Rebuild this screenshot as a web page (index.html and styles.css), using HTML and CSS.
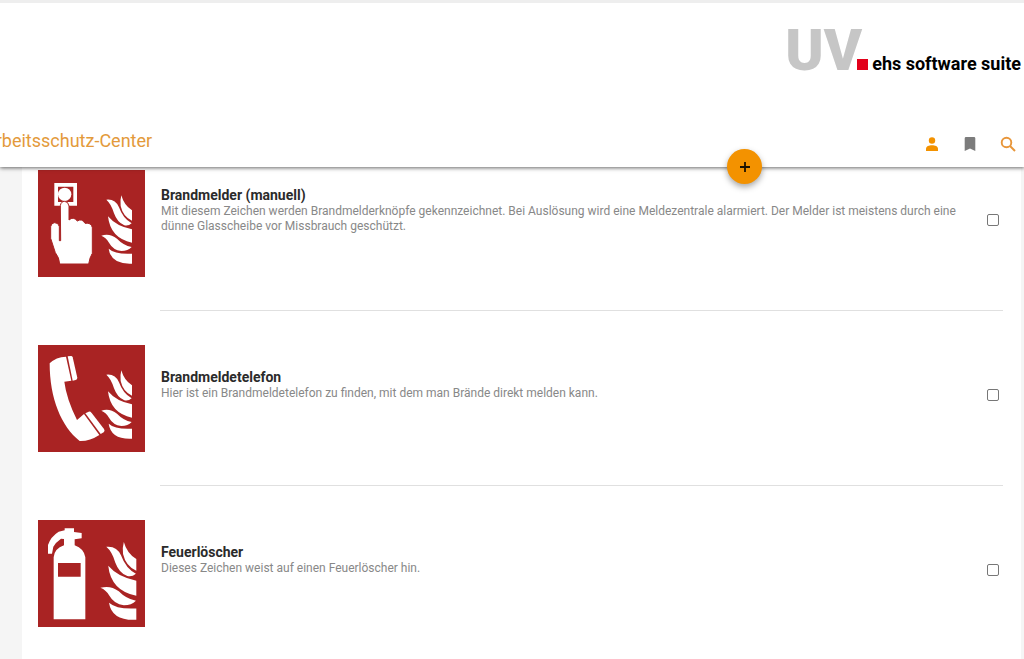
FILE: index.html
```html
<!DOCTYPE html>
<html lang="de">
<head>
  <meta charset="UTF-8">
  <title>Arbeitsschutz-Center</title>
  <meta name="viewport" content="width=device-width, initial-scale=1">
  <link rel="stylesheet" href="styles.css">
</head>
<body>
  <header class="header">
    <div class="brand">
      <span class="brand-uv">UV</span>
      <span class="brand-dot"></span>
      <span class="brand-name">ehs software suite</span>
    </div>
    <div class="toolbar">
      <h1>Arbeitsschutz-Center</h1>
      <nav class="actions">
        <button type="button" aria-label="Profil">
          <svg viewBox="0 0 16 16" fill="#f39200"><circle cx="8" cy="4.5" r="3.2"/><path d="M2 15v-2.200C2 10.300 5 9.300 8 9.300s6 1 6 3.500V15z"/></svg>
        </button>
        <button type="button" aria-label="Lesezeichen">
          <svg viewBox="0 0 16 16" fill="#7c7c7c"><path d="M4 1h8q1.300 0 1.300 1.300V15L8 12.500 2.700 15V2.300Q2.700 1 4 1z"/></svg>
        </button>
        <button type="button" aria-label="Suche">
          <svg viewBox="0 0 16 16" fill="none" stroke="#e8963a" stroke-width="1.900"><circle cx="6.500" cy="6.500" r="4.800"/><path d="M10 10l5 5"/></svg>
        </button>
      </nav>
    </div>
    <button type="button" class="fab" aria-label="Hinzufügen">
      <svg viewBox="0 0 12 12" stroke="#1c1200" stroke-width="1.800"><path d="M6 1v10M1 6h10"/></svg>
    </button>
  </header>

  <main class="list">
    <section class="row">
      <svg class="sign" viewBox="0 0 321 321" aria-hidden="true">
        <defs>
          <g id="flames">
            <path d="M205 89Q232 86 243 112Q255 146 281 160Q271 169 259 166Q238 158 228 130Q220 102 205 89z"/>
            <path d="M250 76Q258 106 282 121V152Q255 140 248 108Q246 90 250 76z"/>
            <path d="M210 139Q235 169 282 178V218Q217 205 210 139z"/>
            <path d="M190 197Q215 189 237 206Q256 226 281 231Q270 243 250 243Q225 240 213 218Q205 203 190 197z"/>
            <path d="M212 236Q232 254 282 251V281Q219 284 212 236z"/>
          </g>
        </defs>
        <rect width="321" height="321" fill="#a92323"/>
        <g fill="#fff">
          <path fill-rule="evenodd" d="M49 39h68v68H49zM60 50v46h46V50z"/>
          <circle cx="80" cy="73" r="20"/>
          <path stroke="#a92323" stroke-width="3" d="M67 107Q69 94 80 94Q91 95 93 108V150Q106 138 118 153Q132 144 141 160Q160 157 163 173V250Q155 262 152 282H65Q64 262 52 248L38 205V170Q40 158 50 158Q62 158 64 170V212H68z"/>
          <use href="#flames"/>
        </g>
      </svg>
      <div class="entry">
        <div class="text">
          <h2><label for="brandmelder">Brandmelder (manuell)</label></h2>
          <p>Mit diesem Zeichen werden Brandmelderknöpfe gekennzeichnet. Bei Auslösung wird eine Meldezentrale alarmiert. Der Melder ist meistens durch eine dünne Glasscheibe vor Missbrauch geschützt.</p>
        </div>
        <input type="checkbox" id="brandmelder">
      </div>
    </section>

    <section class="row">
      <svg class="sign" viewBox="0 0 321 321" aria-hidden="true">
        <rect width="321" height="321" fill="#a92323"/>
        <g fill="#fff">
          <path d="M35 55Q54 36 84 35L100 107L79 110Q85 160 117 225L138 207L184 270Q155 289 125 288C70 245 35 160 35 55z"/>
          <path d="M89 34l10-1q4 0 5 4l14 61q0 5-5 7l-9 2z"/>
          <path d="M142 205l10-5q5-1 9 4l37 48q4 6-1 10l-9 5z"/>
          <use href="#flames"/>
        </g>
      </svg>
      <div class="entry">
        <div class="text">
          <h2><label for="telefon">Brandmeldetelefon</label></h2>
          <p>Hier ist ein Brandmeldetelefon zu finden, mit dem man Brände direkt melden kann.</p>
        </div>
        <input type="checkbox" id="telefon">
      </div>
    </section>

    <section class="row">
      <svg class="sign" viewBox="0 0 321 321" aria-hidden="true">
        <rect width="321" height="321" fill="#a92323"/>
        <g fill="#fff">
          <path fill-rule="evenodd" d="M47 298V112Q49 86 78 76V57L69 56Q52 68 46 80L42 101H30V75Q38 50 62 35L80 31V25H108V36L131 39V55L110 58V76Q138 86 142 112V298zM60 129v41h68v-41z"/>
          <use href="#flames" transform="translate(-35 -21) scale(1.170 1.140)"/>
        </g>
      </svg>
      <div class="entry">
        <div class="text">
          <h2><label for="loescher">Feuerlöscher</label></h2>
          <p>Dieses Zeichen weist auf einen Feuerlöscher hin.</p>
        </div>
        <input type="checkbox" id="loescher">
      </div>
    </section>
  </main>
</body>
</html>
```
FILE: styles.css
```css
* {
  box-sizing: border-box;
}
body {
  margin: 0;
  background: #f5f5f5;
  font-family: Roboto, Arial, sans-serif;
  overflow: hidden;
}
button {
  padding: 0;
  border: none;
  background: none;
  cursor: pointer;
}
.header {
  position: relative;
  border-top: 3px solid #eee;
  background: #fff;
  box-shadow: 0 1px 4px rgba(0,0,0,0.6);
}
.brand {
  display: flex;
  align-items: baseline;
  justify-content: flex-end;
  height: 116px;
  padding: 12px 3px 0 0;
}
.brand-uv {
  margin-right: -5px;
  font-size: 58px;
  line-height: 70px;
  font-weight: 900;
  color: #c6c6c6;
}
.brand-dot {
  width: 11px;
  height: 11px;
  background: #e2001a;
}
.brand-name {
  margin-left: 4px;
  font-size: 18px;
  font-weight: 700;
  color: #000;
}
.toolbar {
  display: flex;
  justify-content: space-between;
  height: 48px;
  padding-right: 8px;
}
/* title runs out of the left edge */
h1 {
  margin: 10px 0 0 -16px;
  font-size: 18px;
  line-height: 24px;
  font-weight: 400;
  color: #e39a3b;
}
.actions {
  display: flex;
  gap: 22px;
  margin-top: 17px;
}
.actions button {
  width: 16px;
  height: 16px;
}
.actions svg {
  display: block;
}
.fab {
  position: absolute;
  right: 262px;
  bottom: -17px;
  display: flex;
  align-items: center;
  justify-content: center;
  width: 35px;
  height: 35px;
  border-radius: 50%;
  background: #f39200;
  box-shadow: 0 3px 6px rgba(0,0,0,0.35);
}
.fab svg {
  width: 12px;
}
.list {
  margin: 0 3px 0 22px;
  padding-top: 3px;
  background: #fff;
}
.row {
  display: flex;
  padding: 0 18px 0 16px;
}
.sign {
  flex: none;
  width: 107px;
  height: 107px;
  margin-top: 34px;
}
.row:first-child .sign {
  margin-top: 0;
}
.entry {
  flex: 1;
  display: flex;
  align-items: center;
  justify-content: space-between;
  height: 175px;
  margin-left: 15px;
  border-bottom: 1px solid #e0e0e0;
}
.row:first-child .entry {
  height: 141px;
  padding-bottom: 34px;
}
.text {
  max-width: 804px;
  padding: 0 0 26px 1px;
}
h2 {
  margin: 0;
  font-size: 14px;
  line-height: 17px;
  font-weight: 700;
  color: #2b2b2b;
}
p {
  margin: 0;
  font-size: 12px;
  line-height: 15px;
  font-weight: 400;
  color: #888;
}
input[type="checkbox"] {
  appearance: none;
  width: 12px;
  height: 12px;
  margin: 0 4px 6px 0;
  border: 1px solid #777;
  border-radius: 2px;
}
```
